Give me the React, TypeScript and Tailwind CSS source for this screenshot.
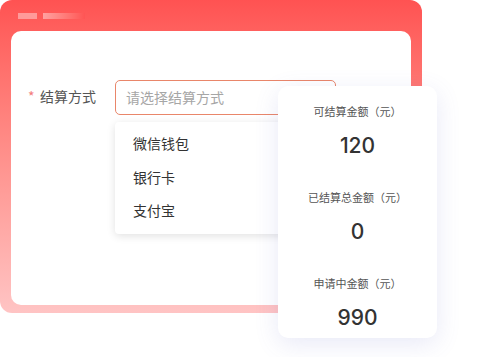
import React from "react";

export default function App() {
  const font = { fontFamily: '"Noto Sans CJK SC", "Noto Sans", sans-serif' } as const;
  return (
    <div className="relative w-[489px] h-[357px] bg-white overflow-hidden" style={font}>
      {/* red panel */}
      <div className="w-[422px] h-[313px] rounded-[12px] bg-gradient-to-b from-[#ff5252] to-[#ffc4c4] px-[11px] pb-[8px] flex flex-col">
        <div className="h-[31px] flex items-start pt-[13px] pl-[7px] gap-[6px]">
          <div className="w-[19px] h-[6px] bg-[#ff9a9a]" />
          <div className="w-[42px] h-[6px] bg-gradient-to-r from-[#ffa0a0] to-[#ff5454]" />
        </div>
        <div className="flex-1 bg-white rounded-[10px] relative">
          <div className="flex items-center pt-[49px] pl-[17px]">
            <span className="text-[#f37b7b] text-[14px] w-[12px] -mt-[2px]">*</span>
            <span className="text-[14px] text-[#555] w-[75px] leading-none -mt-[3px]">结算方式</span>
            <div className="w-[221px] h-[35px] border border-[#e9866a] rounded-[5px] flex items-center pl-[10px] text-[14px] text-[#a6a6a6]">
              请选择结算方式
            </div>
          </div>
          <div className="absolute left-[104px] top-[91px] w-[200px] h-[112px] bg-white rounded-[4px] shadow-[0_2px_8px_rgba(0,0,0,0.12)] flex flex-col pt-[5px] pl-[18px] text-[14px] text-[#333]">
            <div className="h-[33px] shrink-0 flex items-center">微信钱包</div>
            <div className="h-[34px] shrink-0 flex items-center">银行卡</div>
            <div className="h-[33px] shrink-0 flex items-center">支付宝</div>
          </div>
        </div>
      </div>
      {/* stats card */}
      <div className="absolute left-[278px] top-[86px] w-[159px] h-[252px] bg-white rounded-[10px] shadow-[0_6px_24px_rgba(90,100,200,0.14)] flex flex-col items-center pt-[17px]">
        {[
          ["可结算金额（元）", "120"],
          ["已结算总金额（元）", "0"],
          ["申请中金额（元）", "990"],
        ].map(([l, v]) => (
          <div key={l} className="flex flex-col items-center h-[86px] shrink-0">
            <div className="text-[11px] text-[#555] h-[16px] leading-[16px]">{l}</div>
            <div className="text-[21px] font-medium text-[#333] mt-[15px] leading-[24px]" style={{ fontFamily: 'Inter, "Noto Sans", sans-serif' }}>{v}</div>
          </div>
        ))}
      </div>
    </div>
  );
}
